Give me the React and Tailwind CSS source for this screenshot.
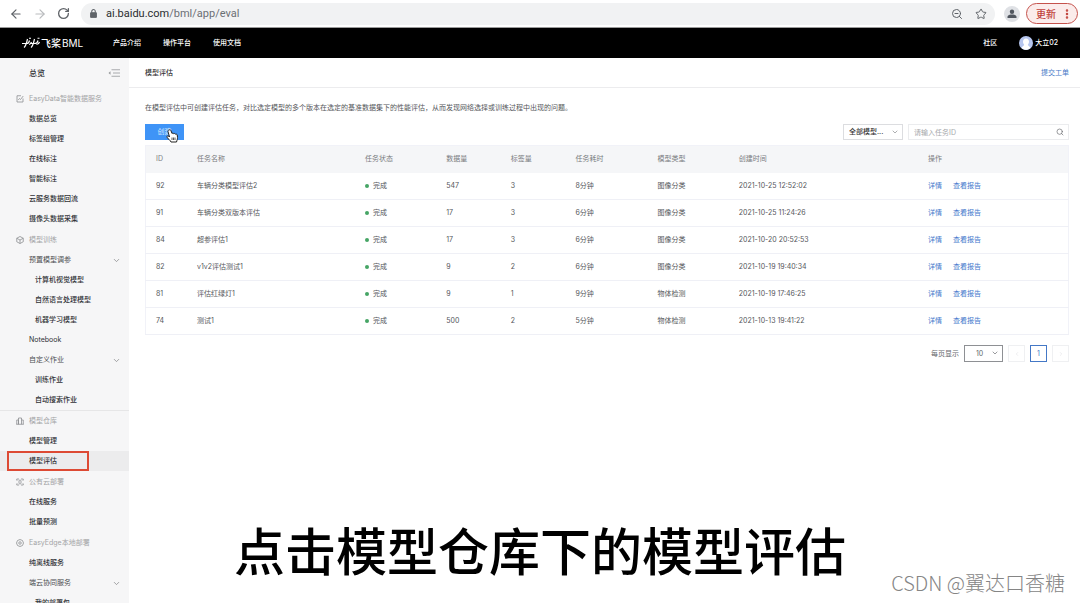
import React from 'react';
import { ArrowLeft, ArrowRight, RotateCw, ZoomOut, Star, ChevronDown, ChevronLeft, ChevronRight, Search, MoreVertical } from 'lucide-react';

const menu = [
  { type: 'group', label: 'EasyData智能数据服务', icon: 'data' },
  { label: '数据总览' },
  { label: '标签组管理' },
  { label: '在线标注' },
  { label: '智能标注' },
  { label: '云服务数据回流' },
  { label: '摄像头数据采集' },
  { type: 'group', label: '模型训练', icon: 'cube' },
  { type: 'folder', label: '预置模型调参' },
  { type: 'child', label: '计算机视觉模型' },
  { type: 'child', label: '自然语言处理模型' },
  { type: 'child', label: '机器学习模型' },
  { label: 'Notebook' },
  { type: 'folder', label: '自定义作业' },
  { type: 'child', label: '训练作业' },
  { type: 'child', label: '自动搜索作业' },
  { type: 'group', label: '模型仓库', icon: 'store', divider: true },
  { label: '模型管理' },
  { label: '模型评估', active: true },
  { type: 'group', label: '公有云部署', icon: 'cloud' },
  { label: '在线服务' },
  { label: '批量预测' },
  { type: 'group', label: 'EasyEdge本地部署', icon: 'edge' },
  { label: '纯离线服务' },
  { type: 'folder', label: '端云协同服务' },
  { type: 'child', label: '我的部署包' },
];

const columns = [
  { label: 'ID', width: 'w-[4.5%]' },
  { label: '任务名称', width: 'w-[18.2%]' },
  { label: '任务状态', width: 'w-[8.8%]' },
  { label: '数据量', width: 'w-[7%]' },
  { label: '标签量', width: 'w-[7%]' },
  { label: '任务耗时', width: 'w-[8.9%]' },
  { label: '模型类型', width: 'w-[8.8%]' },
  { label: '创建时间', width: 'w-[20.5%]' },
  { label: '操作', width: 'w-[16.3%]' },
];

const rows = [
  { id: 92, name: '车辆分类模型评估2', count: 547, tags: 3, cost: '8分钟', kind: '图像分类', time: '2021-10-25 12:52:02' },
  { id: 91, name: '车辆分类双版本评估', count: 17, tags: 3, cost: '6分钟', kind: '图像分类', time: '2021-10-25 11:24:26' },
  { id: 84, name: '超参评估1', count: 17, tags: 3, cost: '6分钟', kind: '图像分类', time: '2021-10-20 20:52:53' },
  { id: 82, name: 'v1v2评估测试1', count: 9, tags: 2, cost: '6分钟', kind: '图像分类', time: '2021-10-19 19:40:34' },
  { id: 81, name: '评估红绿灯1', count: 9, tags: 1, cost: '9分钟', kind: '物体检测', time: '2021-10-19 17:46:25' },
  { id: 74, name: '测试1', count: 500, tags: 2, cost: '5分钟', kind: '物体检测', time: '2021-10-13 19:41:22' },
];

const groupIcons = {
  data: (
    <>
      <path d="M10 1.500H2v12.500h12V7" />
      <path d="M4.500 10l2.500-3 2 2 5.500-7" />
    </>
  ),
  cube: (
    <>
      <path d="M8 1l6.500 3.500v7L8 15l-6.500-3.500v-7z" />
      <path d="M1.500 4.500L8 8l6.500-3.500M8 8v7" />
    </>
  ),
  store: <path d="M1.500 14.500V6H5v8.500M5 14.500V2h6v12.500M11 6h3.500v8.500M.500 14.500h15" />,
  cloud: (
    <>
      <path d="M1.500 5V2H6M10 2h4.500v3M14.500 11v3H10M6 14H1.500v-3" />
      <path d="M4 5l3 3-3 3M12 5L9 8l3 3M6 4.500h4M6 11.500h4" />
    </>
  ),
  edge: (
    <>
      <path d="M8 1l5 2 2 5-2 5-5 2-5-2-2-5 2-5z" />
      <circle cx="8" cy="8" r="2.500" />
    </>
  ),
};

function BrowserBar() {
  return (
    <div className="flex h-7 shrink-0 items-center border-b border-[#9a9a9a] bg-white pr-[2px] pl-2 text-[#5f6368]">
      <button aria-label="Back" className="mr-2 p-[1px]"><ArrowLeft className="size-[14px]" strokeWidth={2} /></button>
      <button aria-label="Forward" className="mr-2 p-[1px] text-[#b9bbbe]"><ArrowRight className="size-[14px]" strokeWidth={2} /></button>
      <button aria-label="Reload" className="mr-[10px] p-[1px]"><RotateCw className="size-[13px]" strokeWidth={2.4} /></button>
      <div className="flex h-[22px] flex-1 items-center rounded-full bg-[#f1f2f3] pr-2 pl-[9px]">
        <svg viewBox="0 0 8 10" className="mr-[9px] h-[9px] w-[7px]" fill="none" stroke="currentColor">
          <rect x="0.500" y="4" width="7" height="5.500" rx="0.500" fill="currentColor" />
          <path d="M2 4V2.500a2 2 0 0 1 4 0V4" strokeWidth="1.200" />
        </svg>
        <span className="flex-1 font-[Roboto] text-[11px] leading-4 text-[#6b6f73]"><span className="text-[#2a2c2f]">ai.baidu.com</span>/bml/app/eval</span>
        <button aria-label="Zoom" className="mr-3"><ZoomOut className="size-3" /></button>
        <button aria-label="Bookmark"><Star className="size-3" /></button>
      </div>
      <button aria-label="Profile" className="mr-[6px] ml-[9px] flex size-4 items-center justify-center rounded-full bg-[#dfe1e5]">
        <svg viewBox="0 0 10 10" className="size-[10px]" fill="#50565f">
          <circle cx="5" cy="2.700" r="2.200" />
          <path d="M.500 9V7.800C.500 6 3 5.500 5 5.500s4.500.500 4.500 2.300V9z" />
        </svg>
      </button>
      <button className="flex h-[21px] items-center rounded-full border border-[#c5524c] bg-[#fbeceb] pr-1 pl-[9px] text-[10px] font-medium text-[#c0413b]">
        更新
        <MoreVertical className="ml-[5px] size-3" strokeWidth={3} />
      </button>
    </div>
  );
}

function TopNav() {
  return (
    <header className="flex h-[30px] shrink-0 items-center bg-black px-[22px] font-medium text-white">
      <a href="#home" className="flex w-[91px] items-center whitespace-nowrap">
        <svg viewBox="0 0 38 24" className="h-3 w-[19px]" fill="none" stroke="white" strokeWidth="2.400">
          <path d="M0 13h10c3 0 4-2 5-6M4 21c3-2 5-8 7-17" />
          <path d="M18 21c3-2 5-8 7-17M16 13h10c3 0 5-2 6-6" />
          <path d="M14 2.500h4M31 2.500h4M14 15c3 0 4-2 5-5M29 15c4 0 5-2 6-5" />
        </svg>
        <span className="text-[10px]">飞桨</span>
        <span className="ml-[1px] text-[10px] font-normal">BML</span>
      </a>
      <nav className="flex flex-1 gap-[22px]">
        <a href="#intro">产品介绍</a>
        <a href="#platform">操作平台</a>
        <a href="#docs">使用文档</a>
      </nav>
      <a href="#community" className="mr-[22px]">社区</a>
      <a href="#user" className="flex items-center gap-[2px]">
        <svg viewBox="0 0 14 14" className="size-[14px]">
          <circle cx="7" cy="7" r="7" fill="#b6c6ef" />
          <path d="M7 2.500c2 0 3 1.500 3 3.200 0 1.500-.700 2.300-1.200 3 .300 1.500 2.200 1.300 2.700 3.300-2.500 2.400-6.500 2.400-9 0 .500-2 2.400-1.800 2.700-3.300C4.700 8 4 7.200 4 5.700 4 4 5 2.500 7 2.500z" fill="#fff" />
        </svg>
        大立02
      </a>
    </header>
  );
}

function MenuItem({ item }) {
  if (item.type === 'group') {
    return (
      <li className={`flex h-[21px] items-center pl-4 text-[#a3a4a6] ${item.divider ? 'border-t border-[#e6e6e7]' : ''}`}>
        <svg viewBox="0 0 16 16" className="mr-[5px] size-2" fill="none" stroke="#8d8f92" strokeWidth="1.600">
          {groupIcons[item.icon]}
        </svg>
        {item.label}
      </li>
    );
  }
  if (item.type === 'folder') {
    return (
      <li>
        <button className="flex h-5 w-full items-center justify-between pr-2 pl-[29px] text-[#4b4d50]">
          {item.label}
          <ChevronDown className="size-[9px] text-[#85878a]" />
        </button>
      </li>
    );
  }
  return (
    <li className={`relative ${item.active ? 'bg-[#ececed]' : ''}`}>
      <a href="#menu" className={`flex h-5 items-center text-[#303236] ${item.label === 'Notebook' ? '' : 'font-medium'} ${item.type === 'child' ? 'pl-[35px]' : 'pl-[29px]'}`}>
        {item.label}
      </a>
      {item.active && <span className="absolute inset-y-0 left-[7px] w-[82px] border-2 border-[#dd4a34]" />}
    </li>
  );
}

function Sidebar() {
  return (
    <aside className="w-[129px] shrink-0 overflow-hidden bg-[#f6f6f7]">
      <div className="flex h-[30px] items-center justify-between pr-[9px] pl-[29px] text-[8px] font-medium text-[#303236]">
        总览
        <button aria-label="收起">
          <svg viewBox="0 0 24 16" className="h-2 w-3" fill="none" stroke="#96989b" strokeWidth="1.600">
            <path d="M7 1.500h17M10 8h14M7 14.500h17" />
            <path d="M5 4.500L1 8l4 3.500z" fill="#96989b" stroke="none" />
          </svg>
        </button>
      </div>
      <ul>
        {menu.map((item) => (
          <MenuItem key={item.label} item={item} />
        ))}
      </ul>
    </aside>
  );
}

function Toolbar() {
  return (
    <div className="flex h-4 items-center gap-[5px]">
      <div className="relative">
        <button className="block h-4 w-[39px] bg-[#3f94f7] text-[#d6e8fe]">创建</button>
        {/* hand pointer */}
        <svg viewBox="0 0 24 28" className="absolute top-[5px] left-[21px] z-10 h-[14px] w-3" fill="white" stroke="#222" strokeWidth="2" strokeLinejoin="round">
          <path d="M6 2c2-1 3.500 0 4 1.500L12 9c1-1 3-1 3.500.500 1-1 3-.500 3.500 1 1-.800 3-.300 3.500 1.500l.500 5c0 4-1 5-2 9H10c-1-3-6-7-8-9-1-2 1-4 3-3l2 2L4 5c-.400-1.500.500-2.500 2-3z" />
          <path d="M12 17v5M15 17v5M18 17v5" strokeWidth="1.500" />
        </svg>
      </div>
      <div className="relative ml-auto">
        <select aria-label="模型类型" className="block h-4 w-[60px] appearance-none border border-[#dcdde0] bg-white pl-[5px] font-medium text-[#333]">
          <option>全部模型...</option>
        </select>
        <ChevronDown className="pointer-events-none absolute top-1 right-1 size-2 text-[#85878a]" />
      </div>
      <div className="relative">
        <input aria-label="任务ID" placeholder="请输入任务ID" className="block h-4 w-[161px] border border-[#ebecee] bg-white pl-[5px] placeholder:text-[#a6a8ab]" />
        <Search className="pointer-events-none absolute top-1 right-[5px] size-2 text-[#66686c]" />
      </div>
    </div>
  );
}

function TaskTable() {
  return (
    <table className="mt-[5px] w-full table-fixed border-collapse border border-[#f1f2f8] text-left text-[#54565a]">
      <thead className="bg-[#f5f6f8] text-[#7a7c80]">
        <tr className="h-[27px]">
          {columns.map((col) => (
            <th key={col.label} className={`py-0 pr-0 pl-[10px] font-normal ${col.width}`}>{col.label}</th>
          ))}
        </tr>
      </thead>
      <tbody>
        {rows.map((row) => (
          <tr key={row.id} className="h-[27px] border-b border-[#eff0f6]">
            <td className="pl-[10px]">{row.id}</td>
            <td className="pl-[10px]">{row.name}</td>
            <td className="pl-[10px]">
              <span className="mr-1 inline-block size-1 rounded-full bg-[#46a565] align-middle" />
              完成
            </td>
            <td className="pl-[10px]">{row.count}</td>
            <td className="pl-[10px]">{row.tags}</td>
            <td className="pl-[10px]">{row.cost}</td>
            <td className="pl-[10px]">{row.kind}</td>
            <td className="pl-[10px]">{row.time}</td>
            <td className="pl-[10px] text-[#4478cc]">
              <a href="#detail" className="mr-[11px]">详情</a>
              <a href="#report">查看报告</a>
            </td>
          </tr>
        ))}
      </tbody>
    </table>
  );
}

function Pagination() {
  return (
    <div className="mt-[10px] flex items-center justify-end gap-[5px] text-[#66686c]">
      <label htmlFor="page-size">每页显示</label>
      <div className="relative">
        <select id="page-size" className="block h-[17px] w-[39px] appearance-none border border-[#8e9094] bg-white pl-[11px]">
          <option>10</option>
        </select>
        <ChevronDown className="pointer-events-none absolute top-1 right-1 size-2" />
      </div>
      <button aria-label="上一页" className="flex size-[17px] items-center justify-center border border-[#eff0f2] text-[#dcdde0]"><ChevronLeft className="size-[6px]" /></button>
      <button className="size-[17px] border border-[#4478c6] text-[#4478c6]">1</button>
      <button aria-label="下一页" className="flex size-[17px] items-center justify-center border border-[#eff0f2] text-[#dcdde0]"><ChevronRight className="size-[6px]" /></button>
    </div>
  );
}

export default function App() {
  return (
    <div className="relative flex h-screen flex-col overflow-hidden bg-white font-[Inter,'Noto_Sans_CJK_SC',sans-serif] text-[7px] leading-[10px]">
      <BrowserBar />
      <TopNav />
      <div className="flex min-h-0 flex-1">
        <Sidebar />
        <main className="min-w-0 flex-1">
          <div className="flex h-[30px] items-center justify-between border-b border-[#ececee] pr-[11px] pl-4">
            <h1 className="font-medium text-[#333]">模型评估</h1>
            <a href="#ticket" className="text-[#4478c6]">提交工单</a>
          </div>
          <div className="pt-[15px] pr-[11px] pl-4">
            <p className="mb-[11px] text-[#54565a]">在模型评估中可创建评估任务，对比选定模型的多个版本在选定的基准数据集下的性能评估，从而发现网络选择或训练过程中出现的问题。</p>
            <Toolbar />
            <TaskTable />
            <Pagination />
          </div>
        </main>
      </div>

      {/* Subtitle and watermark */}
      <p className="absolute inset-x-0 bottom-5 text-center text-[51px] leading-[60px] font-medium text-black">点击模型仓库下的模型评估</p>
      <p className="absolute right-[15px] bottom-2 font-['Noto_Sans_CJK_SC',sans-serif] text-[20px] leading-6 font-light text-[#858585]">CSDN @翼达口香糖</p>
    </div>
  );
}
